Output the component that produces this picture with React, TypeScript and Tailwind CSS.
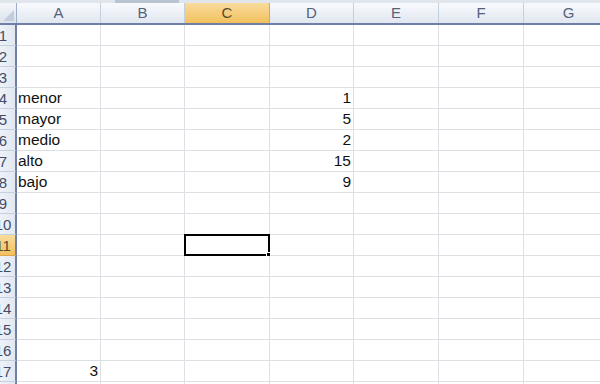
import React from "react";

const cols = ["A", "B", "C", "D", "E", "F", "G"];
const widths = ["w-[84px]", "w-[84px]", "w-[85px]", "w-[84px]", "w-[85px]", "w-[85px]", "w-[90px]"];

const data: Record<string, { v: string; num?: boolean }> = {
  A4: { v: "menor" },
  A5: { v: "mayor" },
  A6: { v: "medio" },
  A7: { v: "alto" },
  A8: { v: "bajo" },
  D4: { v: "1", num: true },
  D5: { v: "5", num: true },
  D6: { v: "2", num: true },
  D7: { v: "15", num: true },
  D8: { v: "9", num: true },
  A17: { v: "3", num: true },
};

const rows = Array.from({ length: 18 }, (_, i) => i + 1);

export default function App() {
  return (
    <div className="w-[600px] h-[384px] overflow-hidden bg-white font-['Liberation_Sans',Arial,sans-serif] relative">
      {/* top strip */}
      <div className="h-[3px] bg-[#e1e6ec] flex">
        <div className="w-[115px]" />
        <div className="w-[64px] bg-[#b9c4d1]" />
      </div>

      {/* column headers */}
      <div className="flex h-[22px] border-b-2 border-[#6f7fa8]">
        <div className="w-[17px] shrink-0 bg-gradient-to-b from-[#f4f6fa] to-[#dde3ec] border-r border-[#9eb0c8] relative overflow-hidden">
          <div className="absolute right-[2px] bottom-[2px] w-0 h-0 border-l-[11px] border-l-transparent border-b-[11px] border-b-[#c3cedc]" />
        </div>
        {cols.map((c, i) => (
          <div
            key={c}
            className={`${widths[i]} shrink-0 flex items-center justify-center border-r text-[15px] ${
              c === "C"
                ? "bg-gradient-to-b from-[#f9dc9c] to-[#f1c05c] border-[#d9a94f] text-[#5a4a2e]"
                : "bg-gradient-to-b from-[#f8fafd] to-[#e1e7f0] border-[#c5d0de] text-[#56627a]"
            }`}
          >
            {c}
          </div>
        ))}
      </div>

      {/* rows */}
      {rows.map((r) => (
        <div key={r} className="flex h-[21px]">
          <div
            className={`w-[17px] shrink-0 overflow-hidden border-r-2 border-[#6f7fa8] border-b text-[15px] ${
              r === 11
                ? "bg-gradient-to-b from-[#f9dc9c] to-[#f1c05c] border-b-[#d9a94f] text-[#5a4a2e]"
                : "bg-gradient-to-r from-[#eef2f8] to-[#e2e8f1] border-b-[#c5d0de] text-[#3f4d66]"
            }`}
          >
            <div className="w-[26px] ml-[-10px] h-full flex items-center justify-center leading-none">{r}</div>
          </div>
          {cols.map((c, i) => {
            const cell = data[`${c}${r}`];
            const selected = c === "C" && r === 11;
            return (
              <div
                key={c}
                className={`${widths[i]} shrink-0 border-r border-b border-[#dcdfe4] relative flex items-center text-[15.5px] text-[#111] leading-none ${
                  cell?.num ? "justify-end pr-[2px]" : "pl-[1px]"
                }`}
              >
                {cell?.v}
                {selected && (
                  <div className="absolute -top-px -left-px w-[86px] h-[22px] border-2 border-black">
                    <div className="absolute -right-[3px] -bottom-[3px] w-[5px] h-[5px] bg-black border border-white" />
                  </div>
                )}
              </div>
            );
          })}
        </div>
      ))}
    </div>
  );
}
